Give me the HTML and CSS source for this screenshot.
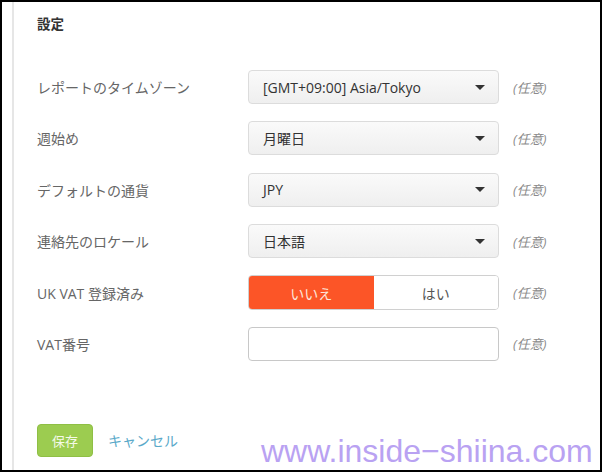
FILE: index.html
```html
<!DOCTYPE html>
<html lang="ja">
<head>
<meta charset="utf-8">
<link rel="stylesheet" href="styles.css">
</head>
<body>
<div class="frame">
  <div class="panel">
    <h2 class="title">設定</h2>
    <div class="form">
      <div class="row">
        <div class="label">レポートのタイムゾーン</div>
        <div class="select"><span>[GMT+09:00] Asia/Tokyo</span><i class="caret"></i></div>
        <div class="opt">(任意)</div>
      </div>
      <div class="row">
        <div class="label">週始め</div>
        <div class="select"><span>月曜日</span><i class="caret"></i></div>
        <div class="opt">(任意)</div>
      </div>
      <div class="row">
        <div class="label">デフォルトの通貨</div>
        <div class="select"><span>JPY</span><i class="caret"></i></div>
        <div class="opt">(任意)</div>
      </div>
      <div class="row">
        <div class="label">連絡先のロケール</div>
        <div class="select"><span>日本語</span><i class="caret"></i></div>
        <div class="opt">(任意)</div>
      </div>
      <div class="row">
        <div class="label">UK VAT 登録済み</div>
        <div class="toggle"><div class="seg on">いいえ</div><div class="seg">はい</div></div>
        <div class="opt">(任意)</div>
      </div>
      <div class="row">
        <div class="label">VAT番号</div>
        <div class="input"></div>
        <div class="opt">(任意)</div>
      </div>
    </div>
    <div class="actions">
      <button class="save">保存</button>
      <a class="cancel">キャンセル</a>
    </div>
  </div>
  <div class="watermark">www.inside−shiina.com</div>
</div>
</body>
</html>
```
FILE: styles.css
```css
html, body {
  margin: 0;
  padding: 0;
  background: #fff;
}
.frame {
  position: relative;
  width: 602px;
  height: 472px;
  box-sizing: border-box;
  border: 2px solid #000;
  overflow: hidden;
  font-family: "Open Sans", "Noto Sans CJK JP", sans-serif;
  color: #333;
}
.panel {
  margin-left: 10px;
  height: 100%;
  border-left: 2px solid #e6e6e6;
  box-sizing: border-box;
  padding: 12px 0 0 23px;
}
.title {
  margin: 0;
  font-size: 13.5px;
  font-weight: bold;
  line-height: 20px;
  color: #333;
}
.form {
  display: flex;
  flex-direction: column;
  gap: 17.4px;
  margin-top: 36px;
}
.row {
  display: flex;
  align-items: center;
  height: 34px;
}
.label {
  width: 211px;
  font-size: 14px;
  color: #666;
}
.select {
  width: 251px;
  height: 34px;
  box-sizing: border-box;
  border: 1px solid #dcdcdc;
  border-radius: 4px;
  background: linear-gradient(#fafafa, #efefef);
  display: flex;
  align-items: center;
  justify-content: space-between;
  padding: 0 13px 0 14px;
  font-size: 14px;
  color: #333;
}
.caret {
  width: 0;
  height: 0;
  border-left: 5px solid transparent;
  border-right: 5px solid transparent;
  border-top: 5px solid #333;
}
.opt {
  margin-left: 14px;
  font-size: 13px;
  font-style: italic;
  color: #8a8a8a;
}
.toggle {
  width: 251px;
  height: 35px;
  box-sizing: border-box;
  border: 1px solid #d0d0d0;
  border-radius: 4px;
  display: flex;
  overflow: hidden;
}
.seg {
  flex: 1;
  display: flex;
  align-items: center;
  justify-content: center;
  font-size: 14px;
  color: #555;
  background: #fff;
}
.seg.on {
  background: #fc5527;
  color: #fde6dc;
}
.input {
  width: 251px;
  height: 34px;
  box-sizing: border-box;
  border: 1px solid #c8c8c8;
  border-radius: 4px;
  background: #fff;
}
.actions {
  display: flex;
  align-items: center;
  gap: 15px;
  margin-top: 63px;
}
.save {
  width: 56px;
  height: 33px;
  border: 1px solid #8fbf45;
  border-radius: 4px;
  background: #9ccc50;
  color: #f4fae8;
  font-family: "Noto Sans CJK JP", sans-serif;
  font-size: 13px;
  padding: 0;
}
.cancel {
  font-size: 14px;
  color: #5aa9c9;
  font-family: "Noto Sans CJK JP", sans-serif;
}
.watermark {
  position: absolute;
  left: 259px;
  top: 431px;
  font-family: "Liberation Sans", Arial, sans-serif;
  font-size: 32px;
  line-height: 36px;
  color: #b9a2f2;
  white-space: nowrap;
}
```
